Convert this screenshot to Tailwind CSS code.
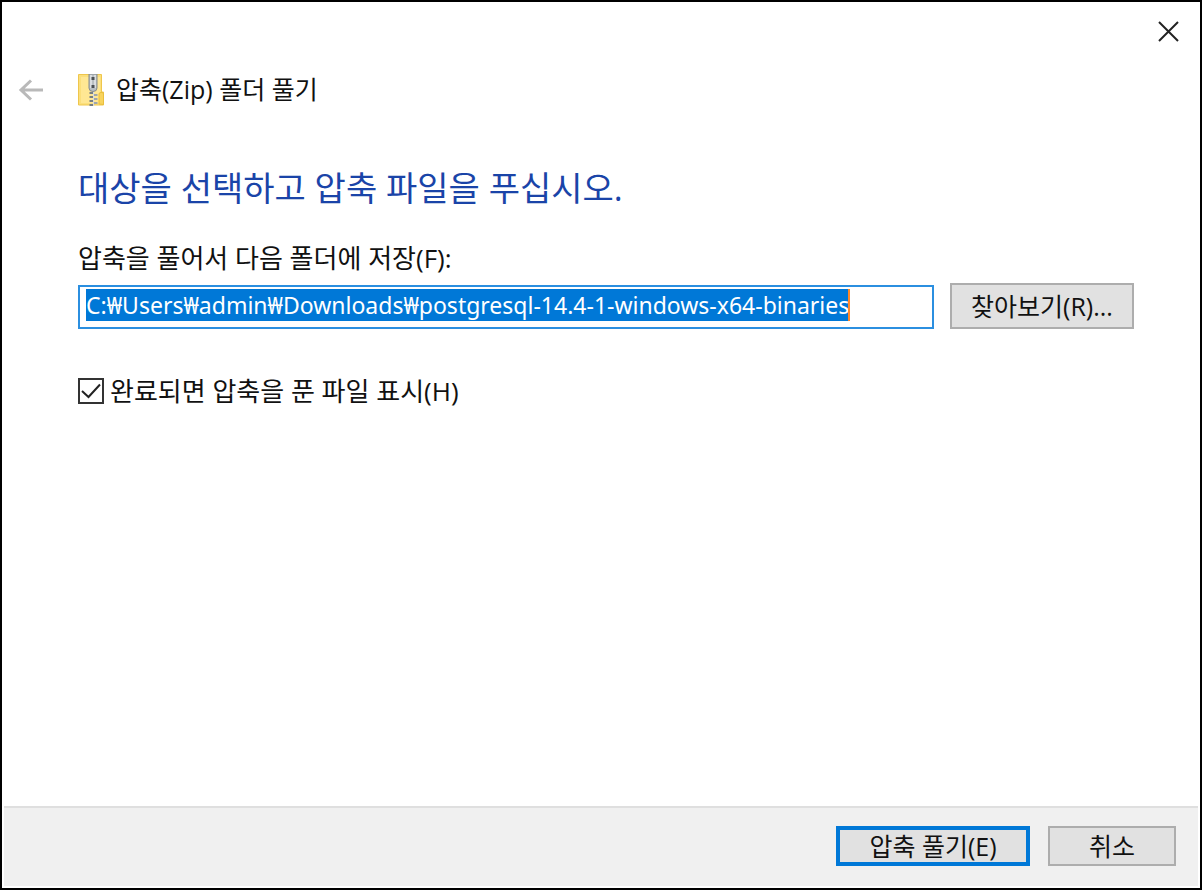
<!DOCTYPE html>
<html lang="ko">
<head>
    <meta charset="UTF-8">
    <meta name="viewport" content="width=device-width, initial-scale=1.0">
    <title>압축(Zip) 폴더 풀기</title>
    <script src="https://cdn.jsdelivr.net/npm/@tailwindcss/browser@4"></script>
</head>
<body class="bg-white font-['Open_Sans','Noto_Sans_CJK_KR',sans-serif] text-[25px] text-[#111]">
    <form class="flex min-h-screen flex-col border-2 border-black p-0.5" onsubmit="return false">
        <!-- title bar -->
        <div class="flex h-12 items-end justify-end px-[18px] pb-2">
            <button type="button" aria-label="닫기">
                <svg class="size-6" viewBox="0 0 24 24" fill="none" stroke="#222" stroke-width="2"><path d="M3 2L22 21M22 2L3 21"/></svg>
            </button>
        </div>
        <div class="mt-[18px] flex h-10 items-center px-3.5">
            <button type="button" aria-label="뒤로" disabled>
                <svg class="h-6 w-7" viewBox="0 0 28 24" fill="none" stroke="#b9b9b9" stroke-width="3"><path d="M25 12H3M13 2.500L3 12L13 21.500"/></svg>
            </button>
            <!-- zip folder -->
            <svg class="ml-8 h-8 w-7" viewBox="0 0 28 32">
                <path d="M.5 .5H23.500V18H25.500V31H.5Z" fill="#fbdf7c" stroke="#efc64c"/>
                <path d="M3 3H22V29H3Z" fill="#ffe793"/>
                <path d="M21 30V20Q21 18.500 23 18.500H24Q25.500 18.500 25.500 20V30.500Z" fill="#f8d45e" stroke="#eabf3d"/>
                <path d="M11 0H19V14Q19 17.500 15 17.500Q11 17.500 11 14Z" fill="#b9bfc2" stroke="#858b8f"/>
                <path d="M13 1V14M17 1V14" stroke="#e5e8ea" stroke-width="1.500"/>
                <rect x="13.500" y="3" width="3" height="3" fill="#4b5054"/>
                <rect x="13.500" y="11" width="3" height="3" fill="#4b5054"/>
                <path d="M13.500 18V32" stroke="#777e83" stroke-width="4" stroke-dasharray="2 2"/>
                <path d="M17.500 20V32" stroke="#a0a6aa" stroke-width="4" stroke-dasharray="2 2"/>
                <path d="M15.500 18V32" stroke="#d7dadd"/>
            </svg>
            <h1 class="ml-2.5">압축(Zip) 폴더 풀기</h1>
        </div>

        <main class="flex-1 pt-[58px] pr-16 pl-[74px]">
            <h2 class="text-[34px] leading-10 text-[#1a44a8]">대상을 선택하고 압축 파일을 푸십시오.</h2>
            <label for="target" class="mt-[34px] block text-[26px] leading-8">압축을 풀어서 다음 폴더에 저장(F):</label>
            <div class="mt-[9px] flex items-end gap-4">
                <div class="relative min-w-0 flex-1">
                    <input id="target" type="text" autofocus spellcheck="false" value="C:₩Users₩admin₩Downloads₩postgresql-14.4-1-windows-x64-binaries" class="block h-11 w-full border-2 border-[#2b8fe0] px-1.5 pb-1 font-['Noto_Sans','Noto_Sans_CJK_KR',sans-serif] text-[23px] leading-7 outline-none selection:bg-[#0078d7] selection:text-white">
                    <!-- caret -->
                    <span class="pointer-events-none absolute top-1 left-[770px] h-8 w-0.5 bg-[#ff8728]"></span>
                </div>
                <button type="button" class="h-[46px] w-46 border-2 border-[#adadad] bg-[#e1e1e1] leading-8">찾아보기(R)...</button>
            </div>
            <label class="mt-11 flex items-center gap-1.5 text-[26px] leading-9">
                <input type="checkbox" checked class="peer size-[26px] appearance-none border-2 border-[#333]">
                <svg class="pointer-events-none absolute hidden size-[26px] peer-checked:block" viewBox="0 0 26 26" fill="none" stroke="#222" stroke-width="2"><path d="M4 13L10.500 19L22 6.500"/></svg>
                <span>완료되면 압축을 푼 파일 표시(H)</span>
            </label>
        </main>

        <footer class="flex justify-end gap-[18px] border-t-2 border-[#dfdfdf] bg-[#f0f0f0] px-[22px] pt-[18px] pb-5">
            <button type="submit" class="flex h-10 w-[194px] items-center justify-center border-4 border-[#0078d7] bg-[#e1e1e1] leading-8">압축 풀기(E)</button>
            <button type="button" class="flex h-10 w-32 items-center justify-center border-2 border-[#adadad] bg-[#e1e1e1] leading-8">취소</button>
        </footer>
    </form>
</body>
<script>
    let target = document.getElementById('target');
    target.focus();
    target.select();
</script>
</html>
